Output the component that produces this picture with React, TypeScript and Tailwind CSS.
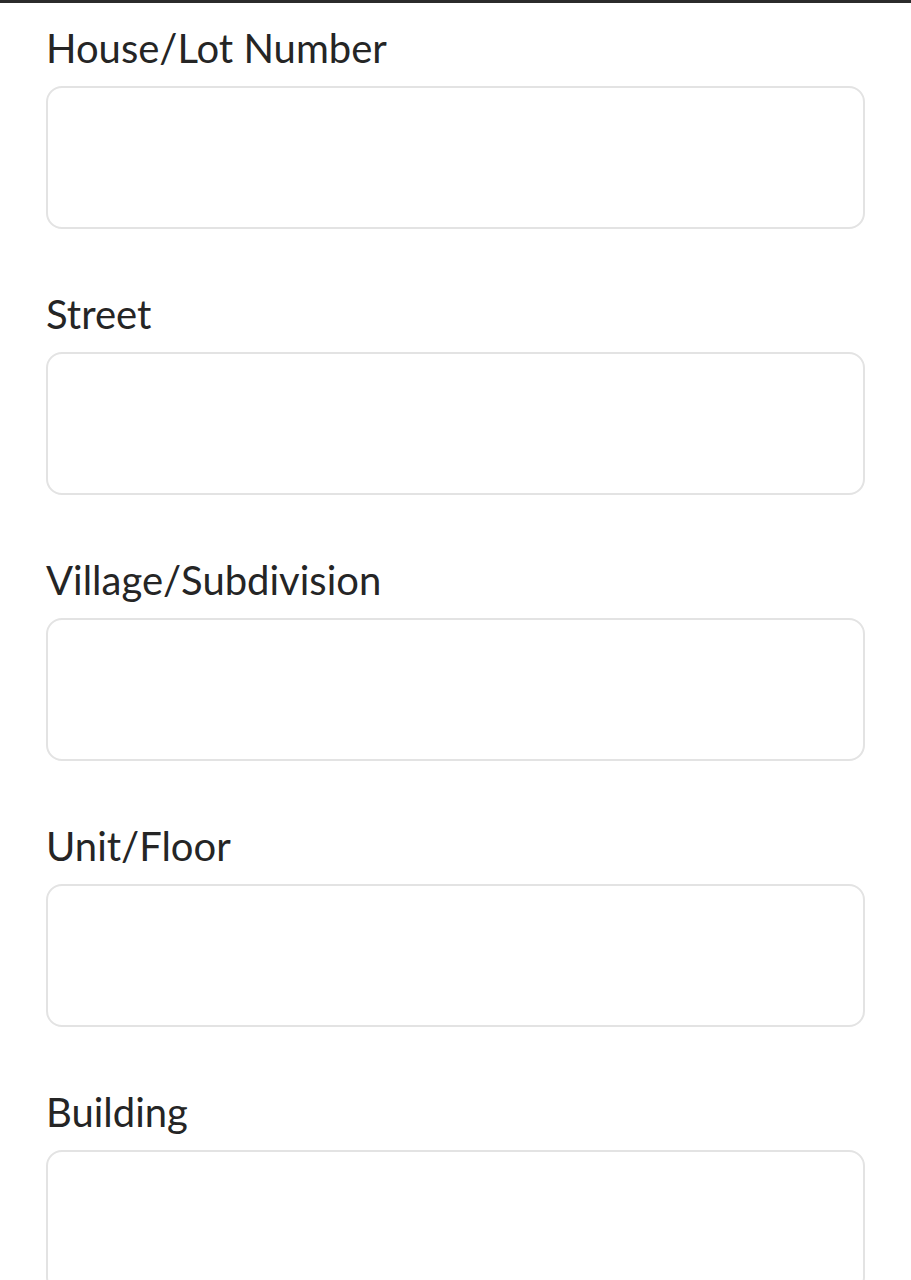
import React from 'react';

const fields = ['House/Lot Number', 'Street', 'Village/Subdivision', 'Unit/Floor', 'Building'];

const App = () => {
  return (
    <div className="h-[1280px] overflow-hidden bg-white font-['Lato','Noto_Sans',sans-serif]">
      <div className="h-[3px] bg-[#2b2b2b]" />
      <div className="px-[46px] pt-[21px]">
        {fields.map((label) => (
          <div key={label} className="mb-[61px]">
            <label className="block text-[40px] leading-[48px] text-[#252525]">{label}</label>
            <input
              type="text"
              className="mt-[14px] block h-[143px] w-full rounded-2xl border-2 border-[#e3e3e3] bg-white px-4 outline-none"
            />
          </div>
        ))}
      </div>
    </div>
  );
};

export default App;
